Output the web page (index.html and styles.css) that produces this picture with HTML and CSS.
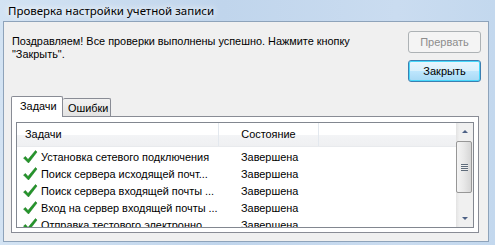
FILE: index.html
```html
<!DOCTYPE html>
<html lang="ru">
<head>
    <meta charset="UTF-8">
    <title>Проверка настройки учетной записи</title>
    <link rel="stylesheet" href="styles.css">
</head>
<body>
    <div class="window">
        <div class="titlebar">Проверка настройки учетной записи</div>
        <div class="client">
            <div class="top">
                <p class="message">Поздравляем! Все проверки выполнены успешно. Нажмите кнопку<br>"Закрыть".</p>
                <div class="buttons">
                    <button class="btn" disabled>Прервать</button>
                    <button class="btn btn-default">Закрыть</button>
                </div>
            </div>

            <div class="tabs">
                <div class="tab-strip">
                    <span class="tab tab-active">Задачи</span>
                    <span class="tab">Ошибки</span>
                </div>
                <div class="tab-panel">
                    <div class="listview">
                        <div class="list-main">
                            <div class="list-header">
                                <div class="col col-task">Задачи</div>
                                <div class="col col-state">Состояние</div>
                                <div class="col col-rest"></div>
                            </div>
                            <div class="list-rows">
                                <div class="row">
                                    <div class="cell cell-task"><svg class="check" viewBox="0 0 16 16"><path d="M1.5 9 L3.5 7.5 L6 10.5 L13.5 1.5 L15 3 L6.5 14 Z"/></svg>Установка сетевого подключения</div>
                                    <div class="cell cell-state">Завершена</div>
                                </div>
                                <div class="row">
                                    <div class="cell cell-task"><svg class="check" viewBox="0 0 16 16"><path d="M1.5 9 L3.5 7.5 L6 10.5 L13.5 1.5 L15 3 L6.5 14 Z"/></svg>Поиск сервера исходящей почт...</div>
                                    <div class="cell cell-state">Завершена</div>
                                </div>
                                <div class="row">
                                    <div class="cell cell-task"><svg class="check" viewBox="0 0 16 16"><path d="M1.5 9 L3.5 7.5 L6 10.5 L13.5 1.5 L15 3 L6.5 14 Z"/></svg>Поиск сервера входящей почты ...</div>
                                    <div class="cell cell-state">Завершена</div>
                                </div>
                                <div class="row">
                                    <div class="cell cell-task"><svg class="check" viewBox="0 0 16 16"><path d="M1.5 9 L3.5 7.5 L6 10.5 L13.5 1.5 L15 3 L6.5 14 Z"/></svg>Вход на сервер входящей почты ...</div>
                                    <div class="cell cell-state">Завершена</div>
                                </div>
                                <div class="row">
                                    <div class="cell cell-task"><svg class="check" viewBox="0 0 16 16"><path d="M1.5 9 L3.5 7.5 L6 10.5 L13.5 1.5 L15 3 L6.5 14 Z"/></svg>Отправка тестового электронно...</div>
                                    <div class="cell cell-state">Завершена</div>
                                </div>
                            </div>
                        </div>
                        <!-- vertical scrollbar -->
                        <div class="scrollbar">
                            <div class="sb-btn"><span class="arrow-up"></span></div>
                            <div class="sb-track">
                                <div class="sb-thumb"><span class="grip"></span></div>
                            </div>
                            <div class="sb-btn"><span class="arrow-down"></span></div>
                        </div>
                    </div>
                </div>
            </div>
        </div>
    </div>
</body>
</html>
```

FILE: styles.css
```css
* {
    box-sizing: border-box;
}

body {
    margin: 0;
    width: 495px;
    height: 245px;
    overflow: hidden;
    background: #c3d8ee;
    font-family: "Liberation Sans", Arial, sans-serif;
    font-size: 10.9px;
    color: #000;
}

.window {
    display: flex;
    flex-direction: column;
    height: 245px;
    background: linear-gradient(90deg, #d3e3f3 0%, #c0d5ec 45%, #cadcf0 80%, #c3d8ee 100%);
}

.titlebar {
    height: 21px;
    padding: 3px 0 0 8px;
    font-family: "Noto Sans", sans-serif;
    font-size: 11.5px;
    color: #000;
    text-shadow: 0 0 6px #fff, 0 0 8px #fff;
}

.client {
    flex: 1;
    margin: 0 6px 3px 3px;
    border: 1px solid #8ea3ba;
    background: #f0f0f0;
    display: flex;
    flex-direction: column;
}

/* message + buttons */
.top {
    display: flex;
    padding: 9px 7px 0 8px;
}

.message {
    flex: 1;
    margin: 4px 0 0 0;
    line-height: 13px;
}

.buttons {
    display: flex;
    flex-direction: column;
    gap: 7px;
}

.btn {
    width: 73px;
    height: 22px;
    padding: 0;
    font-family: inherit;
    font-size: 11px;
    color: #000;
    border: 1px solid #707070;
    border-radius: 3px;
    background: linear-gradient(#f2f2f2 0%, #ebebeb 50%, #dddddd 51%, #cfcfcf 100%);
}

.btn:disabled {
    color: #8d8d8d;
    border-color: #adb2b5;
    background: #f4f4f4;
}

.btn-default {
    border-color: #3c7fb1;
    background: linear-gradient(#eaf6fd 0%, #d9f0fc 50%, #bee6fd 51%, #a7d9f5 100%);
    box-shadow: inset 0 0 0 1px #48d8fb;
}

/* tabs */
.tabs {
    margin: 14px 9px 0 7px;
}

.tab-strip {
    display: flex;
    align-items: flex-end;
    height: 20px;
}

.tab {
    border: 1px solid #898c95;
    border-bottom: none;
    border-radius: 2px 2px 0 0;
}

.tab-active {
    position: relative;
    z-index: 1;
    width: 52px;
    height: 21px;
    margin-bottom: -1px;
    padding: 3px 0 0 8px;
    background: #fff;
}

.tab:not(.tab-active) {
    width: 48px;
    height: 18px;
    padding: 3px 0 0 5px;
    border-left: none;
    background: linear-gradient(#f2f2f2, #e3e3e3);
}

.tab-panel {
    height: 117px;
    border: 1px solid #898c95;
    background: #fff;
    padding: 5px 4px 4px 4px;
}

/* list view */
.listview {
    display: flex;
    height: 106px;
    border: 1px solid #828790;
    background: #fff;
    overflow: hidden;
}

.list-main {
    flex: 1;
    overflow: hidden;
}

.list-header {
    display: flex;
    height: 24px;
    background: linear-gradient(#ffffff 0%, #ffffff 50%, #f3f4f6 51%, #eff0f2 100%);
    border-bottom: 1px solid #e8eaed;
}

.col {
    line-height: 22px;
    border-right: 1px solid #e3e8ee;
}

.col-task {
    width: 202px;
    padding-left: 8px;
}

.col-state {
    width: 100px;
    text-align: center;
}

.col-rest {
    flex: 1;
    border-right: none;
}

.list-rows {
    padding-top: 1px;
}

.row {
    display: flex;
    height: 17px;
    align-items: center;
    white-space: nowrap;
}

.cell-task {
    width: 202px;
    display: flex;
    align-items: center;
    padding-left: 5px;
}

.cell-state {
    padding-left: 22px;
}

.check {
    width: 16px;
    height: 16px;
    margin-right: 3px;
    fill: #24962a;
    stroke: #14701a;
    stroke-width: 0.5;
}

/* scrollbar */
.scrollbar {
    width: 17px;
    display: flex;
    flex-direction: column;
    background: linear-gradient(90deg, #e3e3e3, #f0f0f0 20%, #f0f0f0);
}

.sb-btn {
    height: 17px;
    display: flex;
    align-items: center;
    justify-content: center;
}

.arrow-up,
.arrow-down {
    width: 0;
    height: 0;
    border-left: 3px solid transparent;
    border-right: 3px solid transparent;
}

.arrow-up {
    border-bottom: 3px solid #4d6185;
}

.arrow-down {
    border-top: 3px solid #4d6185;
}

.sb-track {
    flex: 1;
    padding: 1px 1px 0 0;
}

.sb-thumb {
    height: 52px;
    border: 1px solid #979797;
    border-radius: 2px;
    background: linear-gradient(90deg, #f4f4f4, #e8e8e8 50%, #d6d6d6);
    display: flex;
    align-items: center;
    justify-content: center;
}

.grip {
    width: 7px;
    height: 7px;
    background: repeating-linear-gradient(#5f6c7b 0 1px, #eeeeee 1px 2px);
}
```
